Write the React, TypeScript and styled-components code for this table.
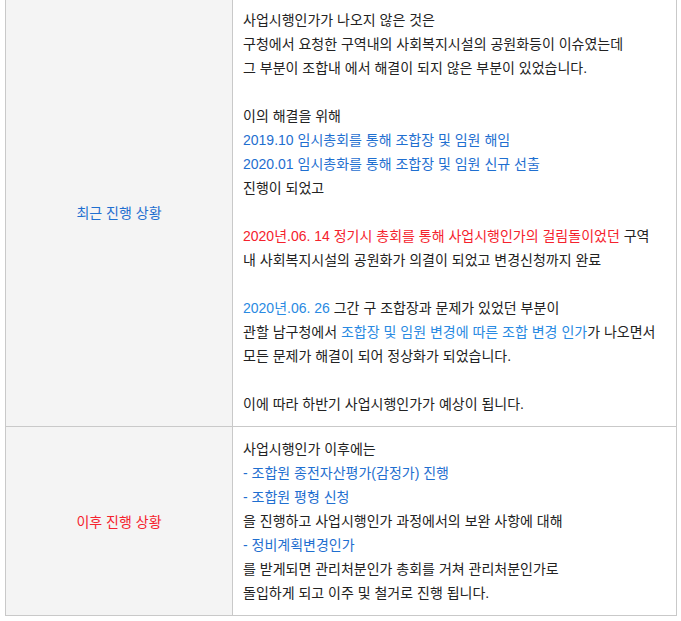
import styled, { createGlobalStyle } from "styled-components"

const GlobalStyle = createGlobalStyle`
    html, body {
        margin: 0;
        padding: 0;
        background: #ffffff;
    }
    body {
        font-family: "Liberation Sans", "Noto Sans CJK KR", sans-serif;
        color: #222222;
    }
`

type Tone = "blue" | "red" | "sky"

const tones: Record<Tone, string> = {
    blue: "#1f6fd0",
    red: "#f5222d",
    sky: "#2a8ae2",
}

export default function App() {
    return (
        <>
            <GlobalStyle />
            <Wrapper>
                <Table>
                    <tbody>
                        <Row>
                            <Label tone="blue">최근 진행 상황</Label>
                            <Cell>
                                <Para>
                                    사업시행인가가 나오지 않은 것은<br />
                                    구청에서 요청한 구역내의 사회복지시설의 공원화등이 이슈였는데<br />
                                    그 부분이 조합내 에서 해결이 되지 않은 부분이 있었습니다.
                                </Para>
                                <Para>
                                    이의 해결을 위해<br />
                                    <Mark tone="blue">2019.10 임시총회를 통해 조합장 및 임원 해임</Mark><br />
                                    <Mark tone="blue">2020.01 임시총화를 통해 조합장 및 임원 신규 선출</Mark><br />
                                    진행이 되었고
                                </Para>
                                <Para>
                                    <Mark tone="red">2020년.06. 14 정기시 총회를 통해 사업시행인가의 걸림돌이었던</Mark> 구역<br />
                                    내 사회복지시설의 공원화가 의결이 되었고 변경신청까지 완료
                                </Para>
                                <Para>
                                    <Mark tone="sky">2020년.06. 26</Mark> 그간 구 조합장과 문제가 있었던 부분이<br />
                                    관할 남구청에서 <Mark tone="sky">조합장 및 임원 변경에 따른 조합 변경 인가</Mark>가 나오면서<br />
                                    모든 문제가 해결이 되어 정상화가 되었습니다.
                                </Para>
                                <Para>이에 따라 하반기 사업시행인가가 예상이 됩니다.</Para>
                            </Cell>
                        </Row>
                        <Row>
                            <Label tone="red">이후 진행 상황</Label>
                            <Cell>
                                <Para>
                                    사업시행인가 이후에는<br />
                                    <Mark tone="blue">- 조합원 종전자산평가(감정가) 진행</Mark><br />
                                    <Mark tone="blue">- 조합원 평형 신청</Mark><br />
                                    을 진행하고 사업시행인가 과정에서의 보완 사항에 대해<br />
                                    <Mark tone="blue">- 정비계획변경인가</Mark><br />
                                    를 받게되면 관리처분인가 총회를 거쳐 관리처분인가로<br />
                                    돌입하게 되고 이주 및 철거로 진행 됩니다.
                                </Para>
                            </Cell>
                        </Row>
                    </tbody>
                </Table>
            </Wrapper>
        </>
    )
}

const Wrapper = styled.div`
    padding: 0 4px 0 5px;
    margin-top: -3px;
`

const Table = styled.table`
    width: 672px;
    border-collapse: collapse;
    table-layout: fixed;
    font-size: 14px;
`

const Row = styled.tr`
    border-bottom: 1px solid #c9c9c9;
`

const Label = styled.th<{ tone: Tone }>`
    width: 226px;
    background: #f4f4f4;
    border: 1px solid #c9c9c9;
    color: ${props => tones[props.tone]};
    font-weight: 400;
    text-align: center;
    vertical-align: middle;
    padding: 0;
`

const Cell = styled.td`
    border: 1px solid #c9c9c9;
    padding: 10px 10px 10px 10px;
    line-height: 24px;
    white-space: nowrap;
    vertical-align: top;
`

const Para = styled.p`
    margin: 0 0 24px;
    &:last-child {
        margin-bottom: 0;
    }
`

const Mark = styled.span<{ tone: Tone }>`
    color: ${props => tones[props.tone]};
`
